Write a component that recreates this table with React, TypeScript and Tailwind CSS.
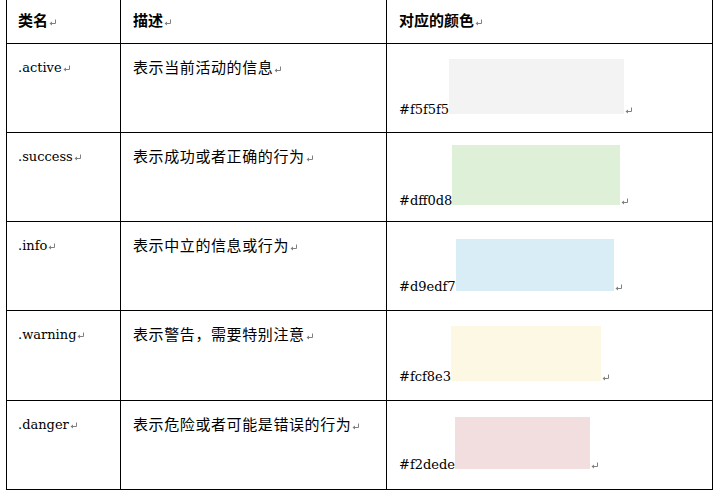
const serif = "font-['DejaVu_Serif',serif]";
const cjk = "font-['Noto_Sans_CJK_SC',sans-serif]";

const rows = [
  { name: ".active", desc: "表示当前活动的信息", hex: "#f5f5f5", h: "h-[89px]", pt: "pt-[15px]", sw: "w-[175px] h-[55px] bg-[#f3f3f3]" },
  { name: ".success", desc: "表示成功或者正确的行为", hex: "#dff0d8", h: "h-[89px]", pt: "pt-[12px]", sw: "w-[168px] h-[60px] bg-[#dff0d8]" },
  { name: ".info", desc: "表示中立的信息或行为", hex: "#d9edf7", h: "h-[89px]", pt: "pt-[17px]", sw: "w-[158px] h-[52px] bg-[#d9edf7]" },
  { name: ".warning", desc: "表示警告，需要特别注意", hex: "#fcf8e3", h: "h-[90px]", pt: "pt-[15px]", sw: "w-[150px] h-[55px] bg-[#fcf8e3]" },
  { name: ".danger", desc: "表示危险或者可能是错误的行为", hex: "#f2dede", h: "h-[89px]", pt: "pt-[16px]", sw: "w-[135px] h-[52px] bg-[#f2dede]" },
];

// Word-style paragraph mark
const Mark = () => (
  <svg width="8" height="7" viewBox="0 0 8 7" className="ml-[1px] inline-block align-baseline">
    <path d="M6.5 0.5 V4.5 H1.5" fill="none" stroke="#808080" strokeWidth="1" />
    <path d="M0.5 4.5 L3 2.5 V6.5 Z" fill="#808080" />
  </svg>
);

export default function App() {
  return (
    <div className="h-[494px] w-[714px] overflow-hidden bg-white text-black">
      <div className="ml-[6px] w-[707px] border-l border-black">
        {/* header */}
        <div className="flex h-[44px] border-b border-black">
          <div className={`w-[114px] shrink-0 border-r border-black pl-[11px] pt-[12px] text-[15px] leading-[16px] font-bold ${cjk}`}>
            类名<Mark />
          </div>
          <div className={`w-[266px] shrink-0 border-r border-black pl-[12px] pt-[12px] text-[15px] leading-[16px] font-bold ${cjk}`}>
            描述<Mark />
          </div>
          <div className={`w-[326px] shrink-0 border-r border-black pl-[12px] pt-[12px] text-[15px] leading-[16px] font-bold ${cjk}`}>
            对应的颜色<Mark />
          </div>
        </div>

        {rows.map((r) => (
          <div key={r.name} className={`flex border-b border-black ${r.h}`}>
            <div className={`w-[114px] shrink-0 border-r border-black pl-[11px] pt-[16px] text-[13px] leading-[15px] ${serif}`}>
              {r.name}<Mark />
            </div>
            <div className={`w-[266px] shrink-0 border-r border-black pl-[12px] pt-[15px] text-[15px] leading-[15px] tracking-[0.6px] ${cjk}`}>
              {r.desc}<Mark />
            </div>
            <div className={`w-[326px] shrink-0 border-r border-black pl-[12px] ${r.pt}`}>
              <div className="flex items-baseline">
                <span className={`text-[13px] leading-[15px] ${serif}`}>{r.hex}</span>
                <div className={r.sw} />
                <Mark />
              </div>
            </div>
          </div>
        ))}
      </div>
    </div>
  );
}
